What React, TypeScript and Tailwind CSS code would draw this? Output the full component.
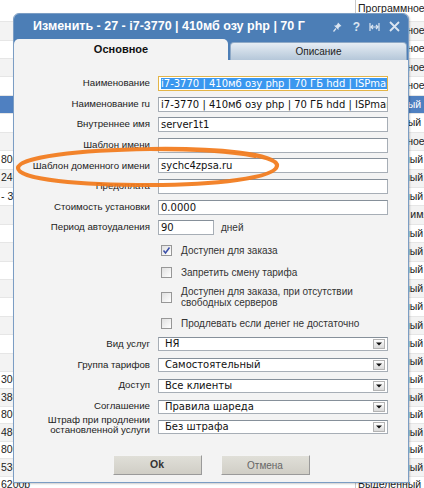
import React from "react";

type BgRow = { left: string; right: string; active?: boolean };

const bgRows: BgRow[] = [
  { left: "", right: "Программное" },
  { left: "", right: "Программное" },
  { left: "", right: "Программное" },
  { left: "", right: "Программное" },
  { left: "", right: "Программное" },
  { left: "", right: "Выделенный", active: true },
  { left: "", right: "Выделенный" },
  { left: "", right: "Программное" },
  { left: "800р", right: "Виртуальный" },
  { left: "2400р", right: "Виртуальный" },
  { left: "- 300р", right: "Виртуальный" },
  { left: "", right: "Доменное имя" },
  { left: "", right: "Виртуальный" },
  { left: "", right: "Виртуальный" },
  { left: "", right: "Виртуальный" },
  { left: "", right: "Виртуальный" },
  { left: "", right: "Виртуальный" },
  { left: "", right: "Виртуальный" },
  { left: "", right: "Виртуальный" },
  { left: "", right: "Виртуальный" },
  { left: "3000р", right: "Виртуальный" },
  { left: "3800р", right: "Виртуальный" },
  { left: "8000р", right: "Виртуальный" },
  { left: "4800р", right: "Виртуальный" },
  { left: "8000р", right: "Виртуальный" },
  { left: "5300р", right: "Виртуальный" },
  { left: "6200р", right: "Выделенный" },
];

const labelFont = "font-['Liberation_Sans',Arial,sans-serif]";
const fieldFont = "font-['DejaVu_Sans',Verdana,sans-serif]";

const Field = ({ label, children }: { label: string; children: React.ReactNode }) => (
  <div className="flex items-center h-[15px]">
    <div className={`w-[136px] text-right text-[9.7px] text-[#222] whitespace-nowrap ${labelFont}`}>{label}</div>
    <div className="ml-[8px] flex items-center">{children}</div>
  </div>
);

const TextBox = ({ value, width = "w-[230px]" }: { value: string; width?: string }) => (
  <div
    className={`${width} h-[15px] bg-white border border-[#a7aeb6] border-t-[#86909a] px-[2px] text-[10px] leading-[13px] text-[#111] whitespace-nowrap overflow-hidden ${fieldFont}`}
  >
    {value}
  </div>
);

const Check = ({ checked, children, h }: { checked?: boolean; children: React.ReactNode; h: string }) => (
  <div className={`flex items-center pl-[147px] ${h}`}>
    <div className="w-[11px] h-[11px] shrink-0 border border-[#979797] bg-gradient-to-br from-[#e0e0e0] to-white flex items-center justify-center">
      {checked && (
        <svg width="9" height="9" viewBox="0 0 9 9">
          <path d="M1.5 4.5 L3.5 7 L7.5 1.5" fill="none" stroke="#3b4fa8" strokeWidth="1.5" />
        </svg>
      )}
    </div>
    <div className={`ml-[9px] text-[10px] leading-[11px] text-[#333] ${labelFont}`}>{children}</div>
  </div>
);

const Select = ({ value }: { value: string }) => (
  <div className="w-[230px] h-[14px] bg-white border border-[#a7aeb6] border-t-[#86909a] flex items-center">
    <span className={`pl-[6px] text-[10px] leading-[12px] text-[#111] whitespace-nowrap ${fieldFont}`}>{value}</span>
    <div className="ml-auto mr-[2px] w-[12px] h-[10px] border border-[#b3b3b3] bg-gradient-to-b from-white to-[#d9d9d9] flex items-center justify-center">
      <svg width="6" height="4" viewBox="0 0 6 4">
        <path d="M0 0.5 H6 L3 3.5 Z" fill="#111" />
      </svg>
    </div>
  </div>
);

const SelectRow = ({ label, value, twoLine }: { label: React.ReactNode; value: string; twoLine?: boolean }) => (
  <div className="flex items-center h-[14px]">
    <div
      className={`w-[136px] text-right text-[9.7px] text-[#222] whitespace-nowrap ${labelFont} ${twoLine ? "leading-[10.5px] mb-[4px]" : ""}`}
    >
      {label}
    </div>
    <div className="ml-[8px]">
      <Select value={value} />
    </div>
  </div>
);

export default function App() {
  return (
    <div className={`relative w-[424px] h-[488px] overflow-hidden bg-white ${labelFont}`}>
      {/* table behind the dialog */}
      <div className="flex flex-col">
        {bgRows.map((r, i) => (
          <div
            key={i}
            className={`flex ${i === 0 ? "h-[22.25px] items-start" : i < 20 ? "h-[18.42px] items-center" : "h-[17.5px] items-center"} ${
              r.active ? "bg-[#4f80c1]" : i % 2 ? "bg-[#f3f3f3]" : "bg-white"
            } border-b border-[#e6e6e6]`}
          >
            <div className={`w-[355px] pl-[1px] text-[10.5px] whitespace-nowrap ${r.active ? "text-white" : "text-[#222]"}`}>
              {r.left}
            </div>
            <div
              className={`flex-1 h-full pl-[2px] border-l border-[#c9c9c9] text-[10.5px] whitespace-nowrap overflow-hidden flex ${
                i === 0 ? "items-start pt-[1px]" : "items-center"
              } ${r.active ? "text-white" : "text-[#222]"}`}
            >
              {r.right}
            </div>
          </div>
        ))}
      </div>

      {/* dialog */}
      <div className="absolute left-[13px] top-[13px] w-[396px] h-[470px] rounded-t-[6px] border border-[#7b9dc4] bg-[#f3f3f3] flex flex-col overflow-hidden shadow-[1px_1px_2px_rgba(0,0,0,0.2)]">
        <div className="h-[25px] shrink-0 bg-[#4c7eb6] flex items-center pl-[19px] pr-[8px]">
          <span className="text-white font-bold text-[12.5px] whitespace-nowrap">
            Изменить - 27 - i7-3770 | 410мб озу php | 70 Г
          </span>
          <div className="ml-auto flex items-center text-[#dbe5f1]">
            <svg width="9" height="10" viewBox="0 0 9 10" className="mr-[11px]">
              <path d="M5 0.5 L8.5 4 L7 4.5 L5.5 6 L5.5 8 L1 3.5 L3 3.5 L4.5 2 Z" fill="#dbe5f1" />
              <path d="M3 6.5 L0.5 9.5" stroke="#dbe5f1" strokeWidth="1.2" />
            </svg>
            <span className="font-bold text-[12px] leading-none mr-[9px]">?</span>
            <svg width="11" height="10" viewBox="0 0 11 10" className="mr-[9px]">
              <path d="M1 1 V9 M10 1 V9 M2 5 H9 M2 5 L4 3 M2 5 L4 7 M9 5 L7 3 M9 5 L7 7" stroke="#dbe5f1" strokeWidth="1.2" fill="none" />
            </svg>
            <svg width="11" height="11" viewBox="0 0 11 11">
              <path d="M1 1 L10 10 M10 1 L1 10" stroke="#dbe5f1" strokeWidth="1.8" />
            </svg>
          </div>
        </div>

        {/* tabs */}
        <div className="h-[21px] shrink-0 bg-[#4c7eb6] flex items-end">
          <div className="w-[214px] h-[21px] bg-[#f3f3f3] rounded-t-[5px] flex items-center justify-center text-[11px] font-bold text-[#111]">
            Основное
          </div>
          <div className="ml-[2px] w-[177px] h-[18px] rounded-t-[4px] border border-b-0 border-[#8ea9c7] bg-gradient-to-b from-[#e6edf4] to-[#b5c7d9] flex items-center justify-center text-[10px] text-[#222]">
            Описание
          </div>
        </div>

        {/* body */}
        <div className="flex-1 flex flex-col pt-[16px]">
          <div className="flex flex-col gap-[5.6px]">
            <Field label="Наименование">
              <div
                className={`w-[230px] h-[15px] bg-white border border-[#e3b548] px-[2px] text-[10px] leading-[13px] whitespace-nowrap overflow-hidden ${fieldFont}`}
              >
                <span className="bg-[#3a97ef] text-white">i7-3770 | 410мб озу php | 70 ГБ hdd | ISPmanager</span>
              </div>
            </Field>
            <Field label="Наименование ru">
              <TextBox value="i7-3770 | 410мб озу php | 70 ГБ hdd | ISPmanager" />
            </Field>
            <Field label="Внутреннее имя">
              <TextBox value="server1t1" />
            </Field>
            <Field label="Шаблон имени">
              <TextBox value="" />
            </Field>
            <Field label="Шаблон доменного имени">
              <TextBox value="sychc4zpsa.ru" />
            </Field>
            <Field label="Предоплата">
              <TextBox value="" />
            </Field>
            <Field label="Стоимость установки">
              <TextBox value="0.0000" />
            </Field>
            <Field label="Период автоудаления">
              <TextBox value="90" width="w-[56px]" />
              <span className="ml-[7px] text-[10px] text-[#333]">дней</span>
            </Field>
          </div>

          <div className="mt-[4px] flex flex-col">
            <Check checked h="h-[22px]">Доступен для заказа</Check>
            <Check h="h-[22px]">Запретить смену тарифа</Check>
            <Check h="h-[28px]">
              Доступен для заказа, при отсутствии
              <br />
              свободных серверов
            </Check>
            <Check h="h-[25px]">Продлевать если денег не достаточно</Check>
          </div>

          <div className="mt-[1px] flex flex-col gap-[6.8px]">
            <SelectRow label="Вид услуг" value="НЯ" />
            <SelectRow label="Группа тарифов" value="Самостоятельный" />
            <SelectRow label="Доступ" value="Все клиенты" />
            <SelectRow label="Соглашение" value="Правила шареда" />
            <SelectRow
              twoLine
              label={
                <>
                  Штраф при продлении
                  <br />
                  остановленной услуги
                </>
              }
              value="Без штрафа"
            />
          </div>

          <div className="mt-[21px] flex justify-center gap-[19px]">
            <button className="w-[89px] h-[20px] border border-[#f4f4f4] border-r-[#9a9a9a] border-b-[#9a9a9a] bg-gradient-to-b from-[#e0dfd8] to-[#d0cec6] text-[10.5px] font-bold text-[#333]">
              Ok
            </button>
            <button className="w-[89px] h-[20px] border border-[#f4f4f4] border-r-[#9a9a9a] border-b-[#9a9a9a] bg-gradient-to-b from-[#e0dfd8] to-[#d0cec6] text-[10px] text-[#666]">
              Отмена
            </button>
          </div>
        </div>
      </div>

      {/* hand-drawn annotation */}
      <svg className="absolute left-0 top-0 pointer-events-none" width="424" height="488" viewBox="0 0 424 488">
        <path
          d="M150 149 C215 148 279 154 277 166 C275 178 215 185 150 185 C82 185 18 180 18 168 C18 157 80 150 150 149 C190 149 230 151 255 156"
          fill="none"
          stroke="#f27a1a"
          strokeWidth="4.2"
          strokeLinecap="round"
          opacity="0.92"
        />
      </svg>
    </div>
  );
}
